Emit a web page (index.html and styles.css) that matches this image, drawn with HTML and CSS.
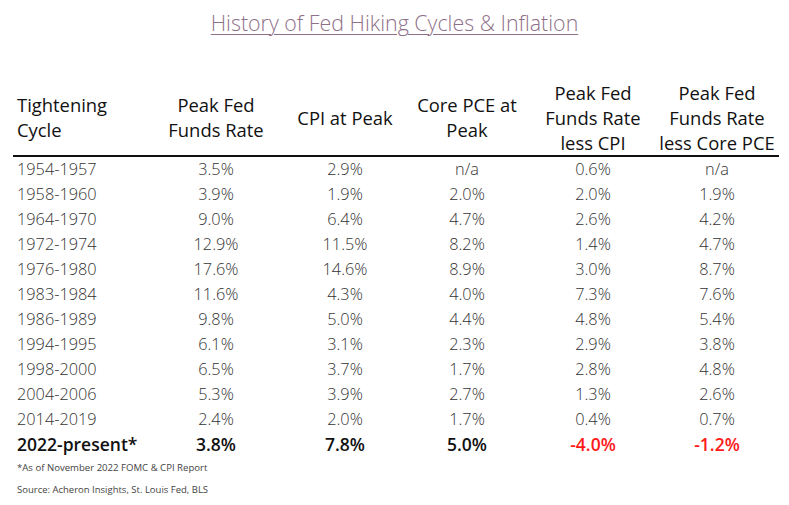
FILE: index.html
```html
<!DOCTYPE html>
<html>
<head>
<meta charset="utf-8">
<link rel="stylesheet" href="styles.css">
</head>
<body>
<div class="page">
  <h1 class="title">History of Fed Hiking Cycles &amp; Inflation</h1>
  <div class="table">
    <div class="row head">
      <div class="c first">Tightening<br>Cycle</div>
      <div class="c">Peak Fed<br>Funds Rate</div>
      <div class="c">CPI at Peak</div>
      <div class="c">Core PCE at<br>Peak</div>
      <div class="c">Peak Fed<br>Funds Rate<br>less CPI</div>
      <div class="c">Peak Fed<br>Funds Rate<br>less Core PCE</div>
    </div>
    <div class="row"><div class="c first">1954-1957</div><div class="c">3.5%</div><div class="c">2.9%</div><div class="c">n/a</div><div class="c">0.6%</div><div class="c">n/a</div></div>
    <div class="row"><div class="c first">1958-1960</div><div class="c">3.9%</div><div class="c">1.9%</div><div class="c">2.0%</div><div class="c">2.0%</div><div class="c">1.9%</div></div>
    <div class="row"><div class="c first">1964-1970</div><div class="c">9.0%</div><div class="c">6.4%</div><div class="c">4.7%</div><div class="c">2.6%</div><div class="c">4.2%</div></div>
    <div class="row"><div class="c first">1972-1974</div><div class="c">12.9%</div><div class="c">11.5%</div><div class="c">8.2%</div><div class="c">1.4%</div><div class="c">4.7%</div></div>
    <div class="row"><div class="c first">1976-1980</div><div class="c">17.6%</div><div class="c">14.6%</div><div class="c">8.9%</div><div class="c">3.0%</div><div class="c">8.7%</div></div>
    <div class="row"><div class="c first">1983-1984</div><div class="c">11.6%</div><div class="c">4.3%</div><div class="c">4.0%</div><div class="c">7.3%</div><div class="c">7.6%</div></div>
    <div class="row"><div class="c first">1986-1989</div><div class="c">9.8%</div><div class="c">5.0%</div><div class="c">4.4%</div><div class="c">4.8%</div><div class="c">5.4%</div></div>
    <div class="row"><div class="c first">1994-1995</div><div class="c">6.1%</div><div class="c">3.1%</div><div class="c">2.3%</div><div class="c">2.9%</div><div class="c">3.8%</div></div>
    <div class="row"><div class="c first">1998-2000</div><div class="c">6.5%</div><div class="c">3.7%</div><div class="c">1.7%</div><div class="c">2.8%</div><div class="c">4.8%</div></div>
    <div class="row"><div class="c first">2004-2006</div><div class="c">5.3%</div><div class="c">3.9%</div><div class="c">2.7%</div><div class="c">1.3%</div><div class="c">2.6%</div></div>
    <div class="row"><div class="c first">2014-2019</div><div class="c">2.4%</div><div class="c">2.0%</div><div class="c">1.7%</div><div class="c">0.4%</div><div class="c">0.7%</div></div>
    <div class="row bold"><div class="c first">2022-present*</div><div class="c">3.8%</div><div class="c">7.8%</div><div class="c">5.0%</div><div class="c neg">-4.0%</div><div class="c neg">-1.2%</div></div>
  </div>
  <p class="note">*As of November 2022 FOMC &amp; CPI Report</p>
  <p class="source">Source: Acheron Insights, St. Louis Fed, BLS</p>
</div>
</body>
</html>
```

FILE: styles.css
```css
html, body {
  margin: 0;
  padding: 0;
  background: #ffffff;
}
.page {
  width: 789px;
  height: 505px;
  font-family: "Open Sans", "Lato", sans-serif;
  color: #333333;
}
.title {
  margin: 0;
  padding-top: 9px;
  height: 31px;
  text-align: center;
  font-size: 21.4px;
  line-height: 28px;
  font-weight: 300;
  color: #8e7088;
  text-decoration: underline;
  text-decoration-thickness: 1px;
  text-underline-offset: 3px;
}
.table {
  margin: 39px 0 0 13px;
  width: 766px;
  padding-right: 4px;
}
.row {
  display: grid;
  grid-template-columns: 132px 142px 116px 128px 124px 124px;
  height: 25px;
  align-items: center;
  font-size: 16.3px;
  line-height: 25px;
  font-weight: 300;
}
.row.head {
  height: 76px;
  align-items: center;
  border-bottom: 2px solid #111;
  font-size: 18.4px;
  font-weight: 400;
  color: #111;
}
.c {
  text-align: center;
  white-space: nowrap;
}
.c.first {
  text-align: left;
  padding-left: 4px;
}
.row.bold {
  font-weight: 600;
  font-size: 17.5px;
  color: #111;
}
.neg {
  color: #ff1a1a;
}
.note {
  margin: 5px 0 0 17px;
  font-size: 9.6px;
  color: #444;
  line-height: 12px;
}
.source {
  margin: 10px 0 0 17px;
  font-size: 9.5px;
  color: #444;
  line-height: 12px;
}
```
